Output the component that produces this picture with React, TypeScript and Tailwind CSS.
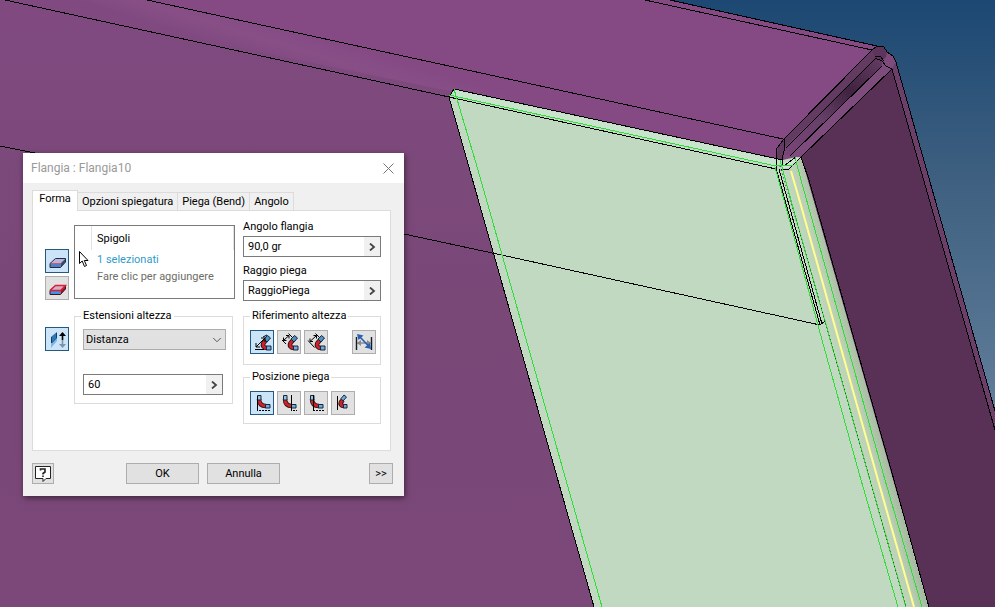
import { useState } from "react";
import type { ReactNode } from "react";
import { ChevronDown } from "lucide-react";

function Scene() {
  return (
    <svg
      className="absolute inset-0 h-full w-full"
      viewBox="0 0 995 607"
      preserveAspectRatio="xMinYMin slice"
      aria-hidden="true"
    >
      <defs>
        <linearGradient id="sky" x1="0" y1="0" x2="0" y2="1">
          <stop offset="0" stopColor="#1c4873" />
          <stop offset="0.3" stopColor="#3f6080" />
          <stop offset="0.7" stopColor="#63809d" />
          <stop offset="1" stopColor="#7c93aa" />
        </linearGradient>
        <linearGradient id="front" x1="0" y1="0" x2="0" y2="1">
          <stop offset="0" stopColor="#804a80" />
          <stop offset="0.5" stopColor="#794877" />
          <stop offset="1" stopColor="#7b4879" />
        </linearGradient>
        <linearGradient id="bend" gradientUnits="userSpaceOnUse" x1="310" y1="35" x2="300" y2="68">
          <stop offset="0" stopColor="#854a84" />
          <stop offset="0.5" stopColor="#884f87" />
          <stop offset="1" stopColor="#804a80" />
        </linearGradient>
        <linearGradient id="groove" gradientUnits="userSpaceOnUse" x1="785" y1="150" x2="882" y2="58">
          <stop offset="0" stopColor="#784576" />
          <stop offset="0.35" stopColor="#68406a" />
          <stop offset="0.65" stopColor="#3f2340" />
          <stop offset="1" stopColor="#653b64" />
        </linearGradient>
        <linearGradient id="flange" gradientUnits="userSpaceOnUse" x1="832" y1="365" x2="862" y2="357">
          <stop offset="0" stopColor="#c0dac0" />
          <stop offset="0.5" stopColor="#bcd0b4" />
          <stop offset="1" stopColor="#a3b89f" />
        </linearGradient>
      </defs>
      <rect width="995" height="607" fill="url(#sky)" />
      <path d="M0 0H670L877 46L784 140L801 157L929 607H0Z" fill="url(#front)" />
      <path d="M147 0H670L877 46L872 50L783 139Z" fill="#854a84" />
      <path d="M5 0H147L783 139L780 162L455 92Z" fill="url(#bend)" />
      <path d="M892 69L995 430V607H929L801 157Z" fill="#5a3156" />
      <path d="M896 62L995 411V430L892 69Z" fill="#6b3f69" />
      <path d="M872 50L784 139L776 152V166L783 161L801 157L892 69L896 62L893 56L887 52L884 47L877 46Z" fill="#7d4b7c" />
      <path d="M872 50L784 139L785 155L790 156L882 66L882 61L875 58Z" fill="url(#groove)" />
      <path d="M872 50L784 139L785 147L875 59Z" fill="#633b62" />
      <path d="M872 50L877 46L884 47L887 52L886 57L882 61L875 58Z" fill="#5d355c" />
      <path d="M784 139L778 147L776 161H783L785 146Z" fill="#633b62" />
      <path d="M454 89L783 160L796 157L801 157L929 607H594L449 97Z" fill="#c0d9c0" />
      <path d="M454 90L783 161L776 167L452 96Z" fill="#c9e3cd" />
      <path d="M783 163L801 157L929 607H906L781 168Z" fill="url(#flange)" />
      <path d="M784 163L797 158L801 158L788 168H783Z" fill="#cfe6d3" />
      <g fill="none" stroke="#000" shapeRendering="crispEdges">
        <path d="M5 0L449 97L776 169M147 0L783 139M645 0L872 50M670 0L877 46" />
        <path d="M0 146L45 155L404 234L497 254L820 325L825 321" />
        <path d="M877 46L884 47L887 52L893 56L896 62L995 411M892 69L995 430" />
        <path d="M877 46L872 50L784 139M875 59L786 148M882 66L790 156M892 69L801 157M875 58L882 61L886 66L892 69M875 57L880 56L884 61" />
        <path d="M784 139L777 148L776 168L820 325M784 139L785 148L782 158V165M779 169L822 324" />
        <path d="M449 97L454 89L783 160M781 169H789L801 157M796 157L784 166M449 97L594 607M801 157L809 180L894 480L929 607" />
      </g>
      <g fill="none" stroke="#2ede38" shapeRendering="crispEdges">
        <path d="M449 95L776 166L793 165M454 89L478 170L602 607" />
        <path d="M775 167L822 340L861 480L898 607M780 160L800 233L870 480L906 607M795 157L801 180L885 480L922 607" />
      </g>
      <path d="M780 166L800 233L870 480L906 607" stroke="#123812" strokeDasharray="1 3" fill="none" />
      <path d="M791 171L800 202L878 480L914 607" stroke="#ffff91" strokeWidth="2" fill="none" />
    </svg>
  );
}

function SlabIcon({ lower }: { lower?: boolean }) {
  return (
    <svg viewBox="0 0 22 22" className="size-full" aria-hidden="true">
      <path d="M4 13.500L9.500 8.500H19.500L14.500 13.500Z" fill={lower ? "#d9adc5" : "#b9b4dc"} />
      <path d="M4 13.500H14.500V17.500H4Z" fill={lower ? "#3e93e4" : "#5480bd"} />
      <path d="M14.500 13.500L19.500 8.500V12L14.500 17.500Z" fill={lower ? "#a01728" : "#3a4b71"} />
      <path
        d="M4 13.500V17.500H14.500L19.500 12V8.500H9.500L4 13.500"
        fill="none"
        stroke={lower ? "#40131d" : "#252b46"}
      />
      {lower ? (
        <path d="M4 13.500L9.500 8.500H19.500L14.500 13.500H4" fill="none" stroke="#d82038" strokeWidth="1.400" />
      ) : (
        <path d="M5 13.500H14" stroke="#d1567b" />
      )}
    </svg>
  );
}

function ExtentIcon() {
  return (
    <svg viewBox="0 0 22 22" className="size-full" aria-hidden="true">
      <path d="M5 9L11 4V13L5 20Z" fill="#78b9ee" />
      <path d="M5 9L11 4V9L5 15Z" fill="#2d78b7" />
      <path d="M5.500 9V15L10.500 10V5" fill="none" stroke="#143d64" />
      <path d="M16.500 5V12" stroke="#000" strokeWidth="1.600" />
      <path d="M13 8L16.500 4L20 8Z" />
      <path d="M16.500 12V18" stroke="#7d93a7" strokeWidth="1.600" />
      <path d="M13 16L16.500 20L20 16Z" fill="#7d93a7" />
    </svg>
  );
}

function HeightIcon({ kind }: { kind: number }) {
  return (
    <svg viewBox="0 0 22 22" className="size-full" aria-hidden="true">
      <path d="M16 8L12.500 12C11 15 13 17 16 17" fill="none" stroke="#321317" strokeWidth="4.600" />
      <path d="M16 8L12.500 12C11 15 13 17 16 17" fill="none" stroke="#cf2128" strokeWidth="2.800" />
      <path d="M13 8L16.500 4.500L19.500 7L16 11Z" fill="#5290bf" stroke="#14283e" />
      <path d="M15.500 15H20V19H15.500Z" fill="#70addd" stroke="#14283e" />
      {kind === 0 && (
        <g fill="none" stroke="#000">
          <path d="M5 16L14 7M5 16V12M5 16H9M14 7H10M14 7V11M4 18.500H13" />
          <path d="M12 6L16 4" />
        </g>
      )}
      {kind === 1 && (
        <g fill="none" stroke="#000">
          <path d="M5.500 9.500L11 4.500M5.500 9.500V6.500M5.500 9.500H8.500M11 4.500H8M11 4.500V7.500M4 9L8 13M10.500 2.500L14 6" />
        </g>
      )}
      {kind === 2 && (
        <g fill="none" stroke="#000">
          <path d="M5 10.500L11.500 4.500M5 10.500V7.500M5 10.500H8M11.500 4.500H8.500M11.500 4.500V7.500M3 9.500L9.500 16.500M10.500 2.500L14 6" />
        </g>
      )}
    </svg>
  );
}

function MeasureIcon() {
  return (
    <svg viewBox="0 0 22 22" className="size-full" aria-hidden="true">
      <path d="M3.500 6V19M18.500 6V19" stroke="#161b22" strokeWidth="1.400" />
      <path d="M4 12H18" stroke="#85898d" strokeWidth="1.400" />
      <path d="M4 12L8 9V15ZM18 12L14 9V15Z" fill="#85898d" />
      <path d="M6 5L16.500 16" stroke="#2861b1" strokeWidth="1.700" />
      <path d="M4 3L10.500 4.500L5.500 9ZM18 18L11.500 16.500L17 12Z" fill="#2861b1" />
    </svg>
  );
}

function PositionIcon({ kind }: { kind: number }) {
  if (kind === 3) {
    return (
      <svg viewBox="0 0 22 22" className="size-full" aria-hidden="true">
        <path d="M11 8L9 10C8 12 9 14 12 14" fill="none" stroke="#321317" strokeWidth="4.600" />
        <path d="M11 8L9 10C8 12 9 14 12 14" fill="none" stroke="#cf2128" strokeWidth="2.800" />
        <path d="M9 6.500L12 3L14.500 5L11 9Z" fill="#70addd" stroke="#14283e" />
        <path d="M11.500 12.500H15V16H11.500Z" fill="#70addd" stroke="#14283e" />
        <path d="M5.500 4V18" stroke="#000" />
      </svg>
    );
  }
  return (
    <svg viewBox="0 0 22 22" className="size-full" aria-hidden="true">
      <g transform={kind === 0 ? "translate(1 0)" : undefined}>
        <path d="M7 7C7 12 10 14 14 14" fill="none" stroke="#321317" strokeWidth="4.500" />
        <path d="M7 7C7 12 10 14 14 14" fill="none" stroke="#cf2128" strokeWidth="2.800" />
        <path d="M5.500 3.500H9V8H5.500Z" fill="#9bc2dc" stroke="#14283e" />
        <path d="M13.500 12.500H18V16H13.500Z" fill="#70addd" stroke="#14283e" />
      </g>
      {kind === 0 && <path d="M6.500 4V19" stroke="#000" />}
      {kind === 1 && <path d="M13.500 3V19" stroke="#000" />}
      {kind === 2 && <path d="M8.500 3V19" stroke="#000" />}
      <path d={kind === 1 ? "M15 18.500H19" : "M8 18.500H19"} stroke="#000" strokeDasharray="2 1" />
    </svg>
  );
}

function IconButton({ label, active, children }: { label: string; active?: boolean; children: ReactNode }) {
  return (
    <button
      type="button"
      aria-label={label}
      aria-pressed={!!active}
      className={
        active
          ? "size-6 shrink-0 border border-[#24587f] bg-[#cce4f7]"
          : "size-6 shrink-0 border border-[#adadad] bg-[#e1e1e1]"
      }
    >
      {children}
    </button>
  );
}

function ValueBox({ id, label, initial }: { id: string; label: string; initial: string }) {
  const [value, setValue] = useState(initial);
  return (
    <div className="flex h-[21px] border border-[#7a7a7a] bg-white">
      <input
        id={id}
        aria-label={label}
        value={value}
        onChange={(event) => setValue(event.target.value)}
        className="min-w-0 flex-1 bg-transparent px-1 outline-none"
      />
      <button
        type="button"
        aria-label={`Opzioni ${label}`}
        className="flex w-4 items-center justify-center bg-[#f0f0f0]"
      >
        <svg viewBox="0 0 7 8" className="h-2 w-[7px]" aria-hidden="true">
          <path d="M1 0.500L5 4L1 7.500" fill="none" stroke="#444" strokeWidth="1.800" />
        </svg>
      </button>
    </div>
  );
}

function Group({ title, children }: { title: string; children: ReactNode }) {
  return (
    <fieldset className="min-w-0 border border-[#dcdcdc] px-1.5 pb-1.5">
      <legend className="h-4 px-0.5 leading-4">{title}</legend>
      {children}
    </fieldset>
  );
}

const tabs = ["Opzioni spiegatura", "Piega (Bend)", "Angolo"];

function FlangeDialog() {
  return (
    <section
      role="dialog"
      aria-label="Flangia : Flangia10"
      className="absolute top-[153px] left-[23px] w-[381px] bg-[#f0f0f0] font-[Roboto,sans-serif] text-[11px] leading-4 text-black shadow-[1px_2px_6px_rgba(0,0,0,0.5)]"
    >
      <header className="flex h-[30px] items-center justify-between bg-white px-2 text-xs text-[#999]">
        <h1>Flangia : Flangia10</h1>
        <button type="button" aria-label="Chiudi" className="p-0.5">
          <svg viewBox="0 0 11 11" className="size-[11px]" aria-hidden="true">
            <path d="M0.500 0.500L10.500 10.500M10.500 0.500L0.500 10.500" stroke="#777" />
          </svg>
        </button>
      </header>

      <div className="pt-[7px] pr-[13px] pl-[9px]">
        <div role="tablist" className="flex items-end">
          <button
            type="button"
            role="tab"
            aria-selected="true"
            className="relative -mb-px h-[21px] w-[46px] border border-b-0 border-[#dcdcdc] bg-white pb-1"
          >
            Forma
          </button>
          {tabs.map((tab) => (
            <button
              key={tab}
              type="button"
              role="tab"
              aria-selected="false"
              className="h-[18px] border-t border-r border-[#dcdcdc] px-1 whitespace-nowrap"
            >
              {tab}
            </button>
          ))}
        </div>

        <div role="tabpanel" className="flex h-[241px] border border-[#dcdcdc] bg-white pr-[9px] pl-3">
          <div className="flex flex-col gap-[3px] pt-[38px]">
            <IconButton label="Modalità selezione bordo" active>
              <SlabIcon />
            </IconButton>
            <IconButton label="Modalità selezione contorno">
              <SlabIcon lower />
            </IconButton>
            <div className="pt-6">
              <IconButton label="Inverti direzione" active>
                <ExtentIcon />
              </IconButton>
            </div>
          </div>

          <div className="ml-[5px] flex w-[161px] flex-col gap-[9px] pt-3.5">
            <div className="h-[74px] border border-[#7a7a7a]">
              <div className="ml-4 h-6 border-x border-[#e3e3e3] pt-[5px] pl-[5px]">Spigoli</div>
              <p className="pt-0.5 pl-[22px] text-[#2f9cc8]">1 selezionati</p>
              <p className="pt-px pl-[22px] text-[#6d6d66]">Fare clic per aggiungere</p>
            </div>
            <div className="mr-0.5">
              <Group title="Estensioni altezza">
                <div className="relative mt-[5px] ml-0.5">
                  <select
                    aria-label="Estensioni altezza"
                    className="block h-[21px] w-full appearance-none border border-[#adadad] bg-[#e1e1e1] px-0.5"
                  >
                    <option>Distanza</option>
                  </select>
                  <ChevronDown
                    className="pointer-events-none absolute top-1 right-0.5 size-3.5 text-[#444]"
                    strokeWidth={1.5}
                  />
                </div>
                <div className="mt-6 mr-[3px] mb-0.5 ml-0.5">
                  <ValueBox id="distance" label="Distanza" initial="60" />
                </div>
              </Group>
            </div>
          </div>

          <div className="ml-2 flex min-w-0 flex-1 flex-col pt-2">
            <label htmlFor="angle" className="mb-px">Angolo flangia</label>
            <ValueBox id="angle" label="Angolo flangia" initial="90,0 gr" />
            <label htmlFor="radius" className="mt-1.5 mb-px">Raggio piega</label>
            <ValueBox id="radius" label="Raggio piega" initial="RaggioPiega" />
            <div className="mt-[7px] flex flex-col gap-1">
              <Group title="Riferimento altezza">
                <div className="flex gap-[3px] pt-1.5">
                  <IconButton label="Facce esterne" active>
                    <HeightIcon kind={0} />
                  </IconButton>
                  <IconButton label="Facce interne">
                    <HeightIcon kind={1} />
                  </IconButton>
                  <IconButton label="Tangente alla piega">
                    <HeightIcon kind={2} />
                  </IconButton>
                  <div className="-mr-0.5 ml-auto">
                    <IconButton label="Allineato o ortogonale">
                      <MeasureIcon />
                    </IconButton>
                  </div>
                </div>
              </Group>
              <Group title="Posizione piega">
                <div className="flex gap-[3px] pt-1.5 pb-0.5">
                  <IconButton label="Interno estensione" active>
                    <PositionIcon kind={0} />
                  </IconButton>
                  <IconButton label="Piega da faccia adiacente">
                    <PositionIcon kind={1} />
                  </IconButton>
                  <IconButton label="Esterno estensione">
                    <PositionIcon kind={2} />
                  </IconButton>
                  <IconButton label="Tangente alla faccia">
                    <PositionIcon kind={3} />
                  </IconButton>
                </div>
              </Group>
            </div>
          </div>
        </div>
      </div>

      <footer className="flex gap-2 py-3 pr-[11px] pl-[9px]">
        <button
          type="button"
          aria-label="Guida"
          className="mr-16 h-[21px] w-[22px] border border-[#adadad] bg-[#e1e1e1]"
        >
          <svg viewBox="0 0 20 19" className="size-full" aria-hidden="true">
            <path d="M2.500 2.500H17.500V14.500H13L10 17.500V14.500H2.500Z" fill="#fff" stroke="#222" />
            <path d="M7.500 6.500V5H12V8L10 9.500V10.500M10 11.500V13" fill="none" stroke="#222" strokeWidth="1.600" />
          </svg>
        </button>
        <button type="button" className="h-[21px] w-[73px] border border-[#adadad] bg-[#e1e1e1]">OK</button>
        <button type="button" className="h-[21px] w-[73px] border border-[#adadad] bg-[#e1e1e1]">Annulla</button>
        <button type="button" className="ml-auto h-[21px] w-6 border border-[#adadad] bg-[#e1e1e1]">&gt;&gt;</button>
      </footer>
    </section>
  );
}

function Cursor() {
  return (
    <svg viewBox="0 0 11 17" className="pointer-events-none absolute top-[251px] left-[79px] h-[17px] w-[11px]" aria-hidden="true">
      <path d="M0.500 0.500V12.500L3.200 10L5.500 15.500L7.500 14.500L5.300 9.500H9Z" fill="#fff" stroke="#000" />
    </svg>
  );
}

export default function App() {
  return (
    <main className="relative min-h-screen overflow-hidden bg-[#7b4879]">
      <Scene />
      <FlangeDialog />
      <Cursor />
    </main>
  );
}
